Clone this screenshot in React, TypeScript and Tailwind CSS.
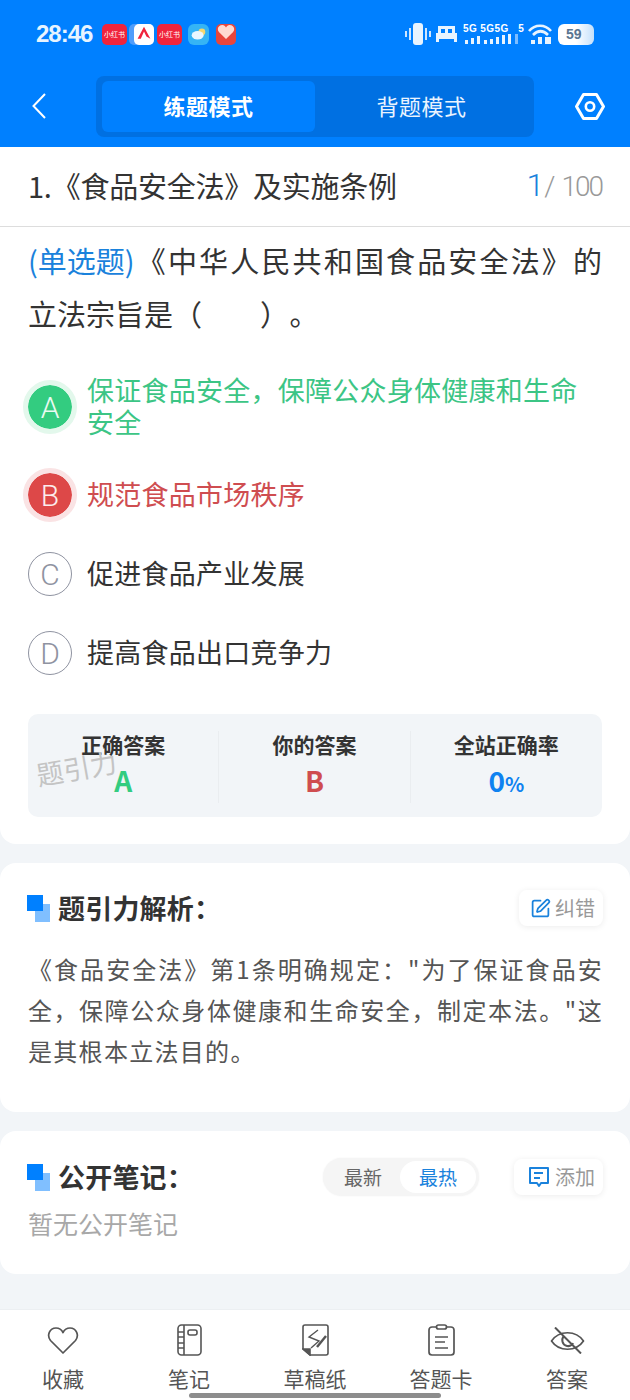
import { SquarePen } from "lucide-react";

const cjk = "font-['Noto_Sans_CJK_SC','Noto_Sans',sans-serif]";

function StatusBar() {
  return (
    <div className="h-[76px] flex items-start justify-between pl-[36px] pr-[36px] pt-[23px]">
      <div className="flex items-center h-[22px]">
        <span className="w-[66px] text-[24px] leading-none font-bold text-[#e8f4ff] tracking-[-1px] font-['Liberation_Sans',sans-serif]">
          28:46
        </span>
        <div className="w-[25px] h-[21px] rounded-[5px] bg-[#f0243c] flex items-center justify-center text-[7px] text-white">
          小红书
        </div>
        <div className="ml-[2px] pl-[5px] bg-[#4f9dfb] rounded-[5px]">
          <div className="w-[20px] h-[21px] rounded-[5px] bg-white flex items-center justify-center">
            <svg viewBox="0 0 20 20" className="w-[16px] h-[16px]">
              <path d="M10 1 L18 16 L13 13 L10 7 L6 16 L2 16 Z" fill="#f0243c" />
            </svg>
          </div>
        </div>
        <div className="ml-[3px] w-[25px] h-[21px] rounded-[5px] bg-[#f0243c] flex items-center justify-center text-[7px] text-white">
          小红书
        </div>
        <div className="ml-[6px] w-[21px] h-[21px] rounded-[6px] bg-[#35b4f5] flex items-center justify-center">
          <svg viewBox="0 0 20 20" className="w-[17px] h-[17px]">
            <circle cx="14" cy="7" r="4" fill="#f5d76e" />
            <ellipse cx="9" cy="11" rx="7" ry="5" fill="#eaf7ff" />
          </svg>
        </div>
        <div className="ml-[7px] w-[20px] h-[21px] rounded-[5px] bg-[#e8453c] flex items-start justify-center overflow-hidden">
          <svg viewBox="0 0 20 18" className="w-[18px] h-[16px]">
            <path d="M10 17 L2 9 C-1 5 2 1 6 1 C8 1 9 2 10 4 C11 2 12 1 14 1 C18 1 21 5 18 9 Z" fill="#ffd9d0" />
          </svg>
        </div>
      </div>
      <div className="flex items-center h-[22px]">
        <svg viewBox="0 0 26 22" className="w-[26px] h-[22px]">
          <rect x="8" y="0" width="10" height="22" rx="3" fill="#e8f4ff" />
          <rect x="4" y="5" width="2" height="12" fill="#cfe6ff" />
          <rect x="0" y="8" width="2" height="6" fill="#cfe6ff" />
          <rect x="20" y="5" width="2" height="12" fill="#cfe6ff" />
          <rect x="24" y="8" width="2" height="6" fill="#cfe6ff" />
        </svg>
        <svg viewBox="0 0 21 16" className="ml-[5px] w-[21px] h-[16px]">
          <path d="M2 0h17v7h2v9h-3v-3H3v3H0V7h2z M5 3v4h4V3z M12 3v4h4V3z" fill="#e8f4ff" fillRule="evenodd" />
        </svg>
        <div className="ml-[6px] flex flex-col items-start w-[65px] h-[22px]">
          <span className="text-[10px] leading-[11px] font-bold text-white tracking-[0.4px] font-['Liberation_Sans',sans-serif] whitespace-pre">
            5G 5G5G   5
          </span>
          <svg viewBox="0 0 56 10" className="ml-[2px] w-[56px] h-[10px]">
            <path d="M0 6h3v4H0z M6 4h3v6H6z M12 2h3v8h-3z M19 6h3v4h-3z M25 5h3v5h-3z M31 3h3v7h-3z M37 1h3v9h-3z M43 0h3v10h-3z" fill="#e8f4ff" />
            <path d="M50 0h3v10h-3z" fill="#7dbdff" />
          </svg>
        </div>
        <svg viewBox="0 0 24 20" className="w-[24px] h-[20px]">
          <path d="M1 7 C7 0 17 0 23 7" fill="none" stroke="#e8f4ff" strokeWidth="2.6" />
          <path d="M5 11 C10 6 15 6 20 11" fill="none" stroke="#e8f4ff" strokeWidth="2.6" />
          <rect x="3" y="16" width="4" height="4" fill="#e8f4ff" />
          <rect x="10" y="13" width="4" height="7" fill="#e8f4ff" />
          <rect x="17" y="13" width="6" height="7" fill="#e8f4ff" />
        </svg>
        <div className="ml-[6px] w-[36px] h-[21px] rounded-[6px] bg-gradient-to-r from-[#ffffff] via-[#ffffff] to-[#c4e0fb] flex items-center pl-[8px] text-[14px] font-bold text-[#5b7590] font-['Liberation_Sans',sans-serif]">
          59
        </div>
      </div>
    </div>
  );
}

function NavBar() {
  return (
    <div className="h-[71px] flex items-start pl-[32px]">
      <svg viewBox="0 0 14 26" className="w-[14px] h-[26px] mt-[17px]" fill="none" stroke="#fff" strokeWidth="2">
        <path d="M13 1 L1.5 13 L13 25" />
      </svg>
      <div className="w-[438px] h-[61px] ml-[50px] rounded-[8px] bg-[#0070e2] pl-[6px] pt-[5px] flex">
        <div className={`w-[213px] h-[51px] rounded-[6px] bg-[#0080ff] flex items-center justify-center text-[22px] leading-none tracking-[0.5px] font-bold text-white pb-[3px] ${cjk}`}>
          练题模式
        </div>
        <div className={`flex-1 h-[51px] flex items-center justify-center text-[22px] leading-none tracking-[0.5px] text-[#eaf4ff] pb-[3px] pr-[6px] ${cjk}`}>
          背题模式
        </div>
      </div>
      <svg viewBox="0 0 30 27" className="w-[30px] h-[27px] ml-[41px] mt-[17px]">
        <path d="M8.5 1.5h13L28.5 13.5l-7 12h-13L1.5 13.5z" fill="none" stroke="#fff" strokeWidth="3" strokeLinejoin="round" />
        <circle cx="15" cy="13.5" r="4.2" fill="none" stroke="#fff" strokeWidth="2.6" />
      </svg>
    </div>
  );
}

function OptionRow({
  letter,
  text,
  tone,
}: {
  letter: string;
  text: string;
  tone: "right" | "wrong" | "plain";
}) {
  if (tone === "plain") {
    return (
      <div className="flex items-center h-[44px]">
        <div className="w-[44px] h-[44px] rounded-full border border-[#8f93a1] flex items-center justify-center text-[30px] font-light text-[#8f93a1] font-['Roboto',sans-serif] shrink-0">
          {letter}
        </div>
        <div className="ml-[15px] pb-[2px] text-[27px] leading-[32px] tracking-[0.25px] text-[#333333]">{text}</div>
      </div>
    );
  }
  const right = tone === "right";
  return (
    <div className="flex items-center">
      <div
        className={`ml-[-5px] w-[54px] h-[54px] rounded-full border-[5px] flex items-center justify-center text-[30px] font-light text-white/90 font-['Roboto',sans-serif] shrink-0 bg-clip-padding ${
          right ? "bg-[#33cc80] border-[#e3f8ec]" : "bg-[#dd4848] border-[#fae3e4]"
        }`}
      >
        {letter}
      </div>
      <div
        className={`ml-[10px] pb-[2px] max-w-[495px] text-[27px] leading-[32px] tracking-[0.25px] ${right ? "text-[#3cc585]" : "text-[#cf4d50]"}`}
      >
        {text}
      </div>
    </div>
  );
}

function SectionTitle({ text }: { text: string }) {
  return (
    <div className="flex items-center">
      <div className="relative w-[23px] h-[27px] shrink-0 ml-[-1px]">
        <div className="absolute right-0 bottom-0 w-[15px] h-[18px] bg-[#80bfff]" />
        <div className="absolute left-0 top-0 w-[16px] h-[16px] bg-[#0080ff]" />
      </div>
      <span className="ml-[8px] text-[27px] leading-[34px] font-bold text-[#333333] tracking-[0.2px]">{text}</span>
    </div>
  );
}

function MiniButton({ text, children }: { text: string; children: React.ReactNode }) {
  return (
    <div className="flex items-center h-[36px] pl-[11px] pr-[8px] rounded-[8px] bg-white shadow-[0_1px_6px_rgba(0,0,0,0.08)]">
      {children}
      <span className="ml-[4px] text-[20px] text-[#999999]">{text}</span>
    </div>
  );
}

function BottomItem({ label, children }: { label: string; children: React.ReactNode }) {
  return (
    <div className="w-[126px] flex flex-col items-center">
      <div className="h-[40px] flex items-center justify-center">{children}</div>
      <span className="mt-[4px] text-[21px] leading-[28px] text-[#555555]">{label}</span>
    </div>
  );
}

export default function App() {
  return (
    <div className={`relative w-[630px] h-[1400px] overflow-hidden bg-[#f2f5f8] flex flex-col ${cjk}`}>
      <div className="bg-[#0080ff] h-[147px] shrink-0">
        <StatusBar />
        <NavBar />
      </div>

      {/* Question card */}
      <div className="bg-white rounded-b-[16px] h-[697px] shrink-0">
        <div className="h-[80px] px-[28px] flex items-center justify-between border-b border-[#dddddd]">
          <span className="text-[29px] leading-[40px] tracking-[-0.25px] pb-[4px] text-[#333333]">1.《食品安全法》及实施条例</span>
          <span className="flex items-baseline font-['Roboto',sans-serif] text-[#999999] text-[28px] font-light pb-[4px]">
            <span className="text-[32px] text-[#1a82dc]">1</span>
            <span>/</span>
            <span className="ml-[6px] tracking-[-2px]">100</span>
          </span>
        </div>

        <div className="px-[28px] pt-[7px]">
          <div className="text-[29px] leading-[53px] text-[#333333]">
            <p className="text-justify [text-align-last:justify]">
              <span className="inline-block text-[#1a82dc]">(单选题)</span>《中华人民共和国食品安全法》的
            </p>
            <p>
              立法宗旨是（　　）<span className="ml-[15px]">。</span>
            </p>
          </div>

          <div className="mt-[34px] flex flex-col">
            <OptionRow letter="A" tone="right" text="保证食品安全，保障公众身体健康和生命安全" />
            <div className="mt-[28px]">
              <OptionRow letter="B" tone="wrong" text="规范食品市场秩序" />
            </div>
            <div className="mt-[30px]">
              <OptionRow letter="C" tone="plain" text="促进食品产业发展" />
            </div>
            <div className="mt-[35px]">
              <OptionRow letter="D" tone="plain" text="提高食品出口竞争力" />
            </div>
          </div>

          <div className="relative mt-[39px] h-[103px] pt-[2px] rounded-[10px] bg-[#f2f5f8] grid grid-cols-3 items-center">
            <div className="flex flex-col items-center border-r border-[#eaedf0]">
              <span className="text-[21px] leading-[26px] font-bold text-[#333333]">正确答案</span>
              <span className="text-[28px] leading-[46px] font-bold text-[#33cc80]">A</span>
            </div>
            <div className="flex flex-col items-center border-r border-[#eaedf0]">
              <span className="text-[21px] leading-[26px] font-bold text-[#333333]">你的答案</span>
              <span className="text-[28px] leading-[46px] font-bold text-[#cf4d50]">B</span>
            </div>
            <div className="flex flex-col items-center">
              <span className="text-[21px] leading-[26px] font-bold text-[#333333]">全站正确率</span>
              <span className="text-[28px] leading-[46px] font-bold text-[#0f82f0]">
                0<span className="text-[20px] leading-none">%</span>
              </span>
            </div>
            <span className="absolute left-[8px] top-[40px] text-[27px] leading-none text-[#c4c4c4] -rotate-[10deg]">
              题引力
            </span>
          </div>
        </div>
      </div>

      {/* Analysis card */}
      <div className="mt-[19px] bg-white rounded-[16px] h-[249px] shrink-0 pl-[28px] pr-[27px] pt-[27px]">
        <div className="flex items-center justify-between">
          <SectionTitle text="题引力解析：" />
          <MiniButton text="纠错">
            <SquarePen className="w-[21px] h-[21px] text-[#1a82dc]" strokeWidth={2} />
          </MiniButton>
        </div>
        <p className="mt-[22px] text-[24px] leading-[41px] tracking-[1.3px] text-justify text-[#555555]">
          《食品安全法》第1条明确规定："为了保证食品安全，保障公众身体健康和生命安全，制定本法。"这是其根本立法目的。
        </p>
      </div>

      {/* Notes card */}
      <div className="mt-[19px] bg-white rounded-[16px] h-[143px] shrink-0 pl-[28px] pr-[27px] pt-[27px]">
        <div className="flex items-center">
          <SectionTitle text="公开笔记：" />
          <div className="ml-auto h-[38px] w-[156px] rounded-full bg-[#f5f5f5] flex items-center p-[3px] shadow-[0_0_2px_rgba(0,0,0,0.06)]">
            <span className="w-[74px] text-center text-[19px] text-[#666666]">最新</span>
            <span className="flex-1 h-[32px] rounded-full bg-white flex items-center justify-center text-[19px] text-[#1a82dc]">
              最热
            </span>
          </div>
          <div className="ml-[35px]">
            <MiniButton text="添加">
              <svg viewBox="0 0 24 24" className="ml-[2px] w-[24px] h-[24px]" fill="none" stroke="#1a82dc" strokeWidth="2">
                <path d="M3 3h18v15h-7l-2 3-2-3H3z" strokeLinejoin="round" />
                <path d="M7 8h9M7 13h6" />
              </svg>
            </MiniButton>
          </div>
        </div>
        <p className="mt-[9px] text-[25px] leading-[36px] text-[#a8a8a8]">暂无公开笔记</p>
      </div>

      {/* Bottom bar */}
      <div className="mt-[35px] flex-1 bg-white border-t border-[#eceff2] flex pt-[10px]">
        <BottomItem label="收藏">
          <svg viewBox="0 0 32 27" className="w-[32px] h-[27px]" fill="none" stroke="#555555" strokeWidth="1.7" strokeLinejoin="round">
            <path d="M16 26 L3.5 13.5 C-0.5 8.5 2.5 1 9 1 C12 1 14.5 2.5 16 5.5 C17.5 2.5 20 1 23 1 C29.5 1 32.5 8.5 28.5 13.5 Z" />
          </svg>
        </BottomItem>
        <BottomItem label="笔记">
          <svg viewBox="0 0 25 32" className="w-[25px] h-[32px]" fill="none" stroke="#555555" strokeWidth="1.6">
            <rect x="1" y="1" width="23" height="30" rx="3.5" />
            <path d="M7 1v30M1 8h6M1 13h6M1 19h6M1 24h6" />
            <rect x="11" y="6" width="9" height="5" rx="2" />
          </svg>
        </BottomItem>
        <BottomItem label="草稿纸">
          <svg viewBox="0 0 27 32" className="w-[27px] h-[32px]" fill="none" stroke="#555555" strokeWidth="1.6">
            <path d="M8 31H24a2 2 0 0 0 2-2V3a2 2 0 0 0-2-2H3a2 2 0 0 0-2 2v22z" strokeLinejoin="round" />
            <path d="M1 25h7v6z" fill="#555555" />
            <path d="M16 6L7 13l10 4-8 7" strokeWidth="1.4" />
            <path d="M15 23l9-11" strokeWidth="2.4" stroke="#555555" />
          </svg>
        </BottomItem>
        <BottomItem label="答题卡">
          <svg viewBox="0 0 27 32" className="w-[27px] h-[32px]" fill="none" stroke="#555555" strokeWidth="1.7">
            <path d="M8 3H4a3 3 0 0 0-3 3v22a3 3 0 0 0 3 3h19a3 3 0 0 0 3-3V6a3 3 0 0 0-3-3h-4" />
            <rect x="8.5" y="1" width="10" height="4" rx="2" />
            <path d="M7 13h13M7 18h10M7 24h13" />
          </svg>
        </BottomItem>
        <BottomItem label="答案">
          <svg viewBox="0 0 35 27" className="w-[35px] h-[27px]" fill="none" stroke="#555555" strokeWidth="1.7" strokeLinejoin="round">
            <path d="M1.5 14 C9 3 26 3 33.5 14 C26 25 9 25 1.5 14 Z" />
            <path d="M14 9 C11 12 12 18 17 19 C20 19.5 22 18.5 23 16" strokeWidth="2" />
            <path d="M5 0.5 L31 26.5" strokeWidth="2" />
          </svg>
        </BottomItem>
      </div>

      {/* Home indicator */}
      <div className="absolute bottom-[2px] left-[189px] w-[252px] h-[5px] rounded-full bg-[#8d8d8d]" />
    </div>
  );
}
